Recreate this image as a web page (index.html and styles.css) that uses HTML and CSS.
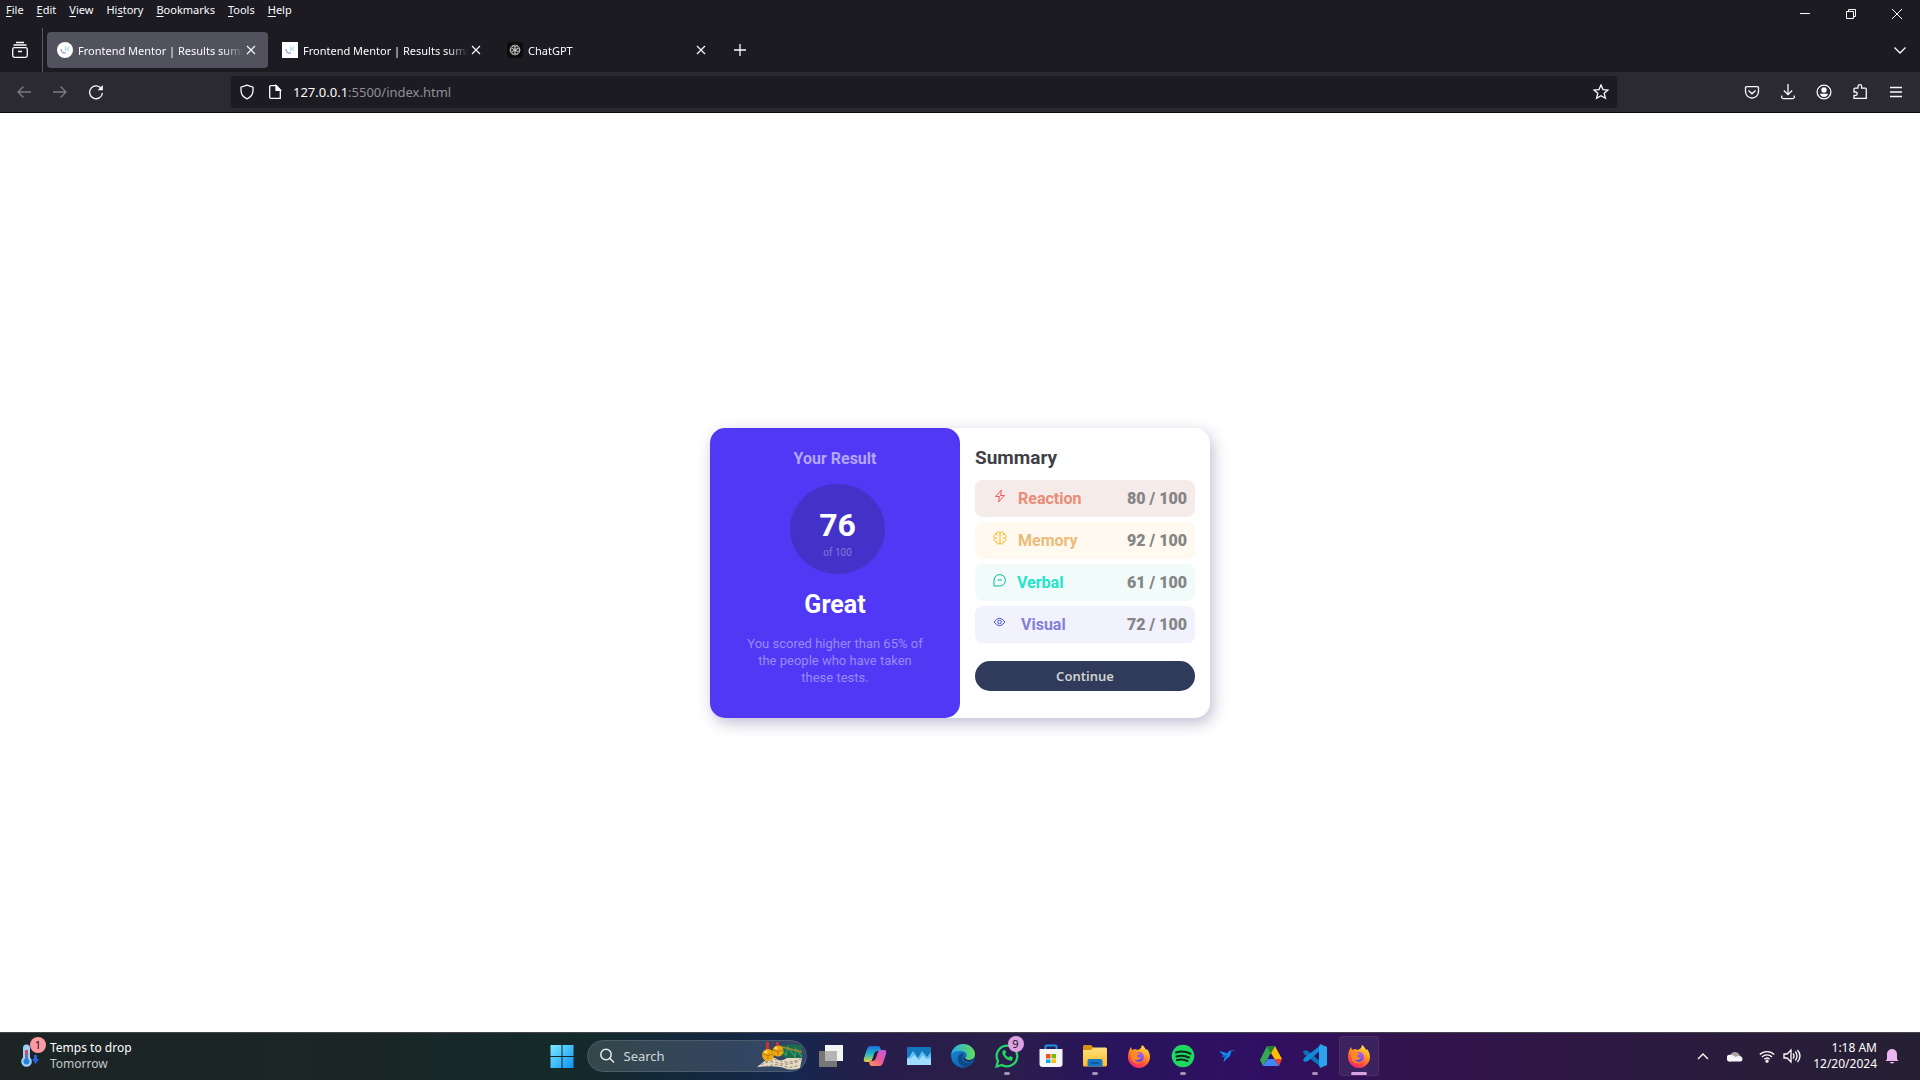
FILE: index.html
```html
<!DOCTYPE html>
<html lang="en">
<head>
<meta charset="utf-8">
<title>Frontend Mentor | Results summary component</title>
<link rel="stylesheet" href="styles.css">
</head>
<body>
<svg class="defs" aria-hidden="true">
  <defs>
    <linearGradient id="win" x1="0" y1="0" x2="1" y2="1"><stop offset="0" stop-color="#7eeaff"/><stop offset="1" stop-color="#0a93f5"/></linearGradient>
    <linearGradient id="foxBody" x1=".8" y1="0" x2=".3" y2="1"><stop offset="0" stop-color="#fff04a"/><stop offset=".4" stop-color="#ff9a1f"/><stop offset=".75" stop-color="#ff4a3d"/><stop offset="1" stop-color="#f0257e"/></linearGradient>
    <linearGradient id="foxCore" x1=".7" y1="0" x2=".3" y2="1"><stop offset="0" stop-color="#b15cff"/><stop offset="1" stop-color="#5a49d6"/></linearGradient>
    <linearGradient id="copA" x1="0" y1="0" x2="0" y2="1"><stop offset="0" stop-color="#1a6be0"/><stop offset=".5" stop-color="#22b8c8"/><stop offset="1" stop-color="#e8d438"/></linearGradient>
    <linearGradient id="copB" x1="1" y1="0" x2="0" y2="1"><stop offset="0" stop-color="#b45cf0"/><stop offset=".5" stop-color="#f0569a"/><stop offset="1" stop-color="#ff9a4a"/></linearGradient>
    <linearGradient id="edgeA" x1="0" y1="0" x2="1" y2="0"><stop offset="0" stop-color="#2aa6e8"/><stop offset="1" stop-color="#5fe05a"/></linearGradient>
    <linearGradient id="edgeB" x1="0" y1="0" x2="1" y2="1"><stop offset="0" stop-color="#1b8fdc"/><stop offset="1" stop-color="#0c4f9e"/></linearGradient>
    <linearGradient id="folder" x1="0" y1="0" x2="0" y2="1"><stop offset="0" stop-color="#ffe07a"/><stop offset="1" stop-color="#fbbc2c"/></linearGradient>
    <linearGradient id="therm" x1="0" y1="0" x2="0" y2="1"><stop offset="0" stop-color="#ef4458"/><stop offset="1" stop-color="#1e86d8"/></linearGradient>
    <symbol id="close" viewBox="0 0 16 16"><path d="M4 4l8 8M12 4l-8 8" fill="none" stroke="currentColor" stroke-width="1.1"/></symbol>
    <symbol id="fm" viewBox="0 0 16 16"><path d="M4 7c0 3 2 4.500 5 4" fill="none" stroke="#a9a8dc" stroke-width="1.500"/><path d="M8.500 4v5M12 5l-2 2 2 2" fill="none" stroke="#a9dfe9" stroke-width="1.200"/></symbol>
    <symbol id="firefox" viewBox="0 0 24 24">
      <path d="M1 13C1 9 2 6 4 3l1 3 3-1c1 0 2 1 3 1l3-2 1-3c2 1 3 3 4 5l1-1c2 3 3 5 3 8 0 6-5 11-11 11S1 19 1 13z" fill="url(#foxBody)"/>
      <circle cx="12" cy="13" r="5" fill="url(#foxCore)"/>
      <path d="M4 9c2-2 5-2 7 0l2 1c-1 1-3 1-3 2s2 2 4 1c-1 3-5 4-7 2 1 3 5 4 8 3-6 4-12 0-11-9z" fill="#ff8a24"/>
    </symbol>
  </defs>
</svg>

<header class="browser">
  <div class="menubar">
    <nav class="menus" aria-label="Menu bar">
      <button><u>F</u>ile</button><button><u>E</u>dit</button><button><u>V</u>iew</button><button>Hi<u>s</u>tory</button><button><u>B</u>ookmarks</button><button><u>T</u>ools</button><button><u>H</u>elp</button>
    </nav>
    <div class="window-controls">
      <button aria-label="Minimize"><svg width="12" height="12" viewBox="0 0 12 12"><path d="M1 5.500h10"/></svg></button>
      <button aria-label="Restore"><svg width="12" height="12" viewBox="0 0 12 12"><path d="M1.500 3.500h7v7h-7zM3.500 3.500v-2h7v7h-2"/></svg></button>
      <button aria-label="Close"><svg width="12" height="12" viewBox="0 0 12 12"><path d="M1 1l10 10M11 1L1 11"/></svg></button>
    </div>
  </div>
  <div class="tabstrip">
    <button class="view-button" aria-label="Firefox View"><svg width="18" height="18" viewBox="0 0 18 18"><rect x="1.700" y="6.700" width="14.600" height="9.600" rx="1.800"/><path d="M2.500 4.500Q3 4 4 4h10q1 0 1.500.5M5 1.500h8M7 10.500h4"/></svg></button>
    <div class="tabs">
      <div class="tab active"><svg class="favicon round" viewBox="0 0 16 16"><use href="#fm"/></svg><span class="tab-title">Frontend Mentor | Results summ</span><button aria-label="Close tab"><svg width="16" height="16"><use href="#close"/></svg></button></div>
      <div class="tab"><svg class="favicon" viewBox="0 0 16 16"><use href="#fm"/></svg><span class="tab-title">Frontend Mentor | Results summ</span><button aria-label="Close tab"><svg width="16" height="16"><use href="#close"/></svg></button></div>
      <div class="tab"><svg class="favicon dark" viewBox="0 0 16 16"><g fill="none" stroke="#d8d8d8" stroke-width=".7"><ellipse cx="8" cy="5.300" rx="3" ry="2.200"/><ellipse cx="8" cy="5.300" rx="3" ry="2.200" transform="rotate(60 8 8)"/><ellipse cx="8" cy="5.300" rx="3" ry="2.200" transform="rotate(120 8 8)"/><ellipse cx="8" cy="5.300" rx="3" ry="2.200" transform="rotate(180 8 8)"/><ellipse cx="8" cy="5.300" rx="3" ry="2.200" transform="rotate(240 8 8)"/><ellipse cx="8" cy="5.300" rx="3" ry="2.200" transform="rotate(300 8 8)"/></g></svg><span class="tab-title">ChatGPT</span><button aria-label="Close tab"><svg width="16" height="16"><use href="#close"/></svg></button></div>
    </div>
    <button class="new-tab" aria-label="New tab"><svg width="16" height="16" viewBox="0 0 16 16"><path d="M8 2v12M2 8h12"/></svg></button>
    <button class="all-tabs" aria-label="List all tabs"><svg width="16" height="16" viewBox="0 0 16 16"><path d="M2.500 5.500L8 11l5.500-5.500"/></svg></button>
  </div>
  <div class="toolbar">
    <div class="history">
      <button class="dim" aria-label="Back"><svg width="16" height="16" viewBox="0 0 16 16"><path d="M15 8H2M7.500 2.500L2 8l5.500 5.500"/></svg></button>
      <button class="dim" aria-label="Forward"><svg width="16" height="16" viewBox="0 0 16 16"><path d="M1 8h13M8.500 2.500L14 8l-5.500 5.500"/></svg></button>
      <button aria-label="Reload"><svg width="16" height="16" viewBox="0 0 16 16"><path d="M13.500 5A6.400 6.400 0 1 0 14.400 9"/><path d="M14.800 1v5.200H9.600z" fill="currentColor" stroke="none"/></svg></button>
    </div>
    <div class="urlbar">
      <svg width="16" height="16" viewBox="0 0 16 16"><path d="M8 1.200l6 2v3.300c0 4-2.500 6.800-6 8.300-3.500-1.500-6-4.300-6-8.300V3.200z"/></svg>
      <svg width="16" height="16" viewBox="0 0 16 16"><path d="M3.700 1.700h5.600l4 4v8.600H3.700a1 1 0 0 1-1-1V2.700a1 1 0 0 1 1-1z"/><path d="M9 1.500v4.800h4.500z" fill="currentColor"/></svg>
      <span class="url"><b>127.0.0.1</b>:5500/index.html</span>
      <button aria-label="Bookmark this page"><svg width="16" height="16" viewBox="0 0 16 16"><path d="M8 1l2 4.600 5 .4-3.800 3.300 1.200 5L8 11.800l-4.400 2.500 1.200-5L1 6l5-.4z"/></svg></button>
    </div>
    <div class="actions">
      <button aria-label="Pocket"><svg width="16" height="16" viewBox="0 0 16 16"><path d="M2.500 2.700h11a1 1 0 0 1 1 1V7.500a6.500 6.500 0 0 1-13 0V3.700a1 1 0 0 1 1-1zM4.500 6.500L8 9.800l3.500-3.300"/></svg></button>
      <button aria-label="Downloads"><svg width="16" height="16" viewBox="0 0 16 16"><path d="M8 0v10.500M3.800 6.500L8 10.700l4.200-4.200M1.700 11.500v1.600a1.500 1.500 0 0 0 1.500 1.500h9.600a1.500 1.500 0 0 0 1.500-1.500v-1.600"/></svg></button>
      <button aria-label="Account"><svg width="16" height="16" viewBox="0 0 16 16"><circle cx="8" cy="8" r="6.900"/><g fill="currentColor" stroke="none"><circle cx="8" cy="6" r="2.700"/><path d="M4 9.800h8c0 2-2 3.200-4 3.200s-4-1.200-4-3.200z"/></g></svg></button>
      <button aria-label="Extensions"><svg width="16" height="16" viewBox="0 0 16 16"><path d="M2 8V5.200a1 1 0 0 1 1-1h3V2.500a1.800 1.800 0 0 1 3.600 0v1.700h3.700a1 1 0 0 1 1 1v9.200H2v-3h1.500a1.700 1.700 0 0 0 0-3.400z"/></svg></button>
      <button aria-label="Open menu"><svg width="16" height="16" viewBox="0 0 16 16"><path d="M2 3.500h12M2 8h12M2 12.500h12"/></svg></button>
    </div>
  </div>
</header>

<main>
  <article class="card">
    <section class="result">
      <h2>Your Result</h2>
      <div class="score"><strong>76</strong><span>of 100</span></div>
      <h1>Great</h1>
      <p>You scored higher than 65% of the people who have taken these tests.</p>
    </section>
    <section class="summary">
      <h2>Summary</h2>
      <ul>
        <li class="reaction"><svg width="25" height="16" viewBox="0 0 25 16"><path d="M8.500 2L2.500 8.500h4L5.500 14l6-6.500h-4z"/></svg><span>Reaction</span><b>80 / 100</b></li>
        <li class="memory"><svg width="25" height="16" viewBox="0 0 25 16"><path d="M7 2v12M7 3.500C6 1 3 1.500 3 4 .5 4.500.2 7 1.500 8c-1 2 0 3.500 1.700 4C4 14.500 6.500 14.500 7 13c.5 1.500 3 1.500 3.800-1 1.700-.5 2.700-2 1.700-4C13.800 7 13.500 4.500 11 4c0-2.500-3-3-4-.5M1.500 8H4M12.500 8H10M3 4l1.500 1.500M11 4L9.500 5.500M3.500 12L5 10.500M10.500 12L9 10.500"/></svg><span>Memory</span><b>92 / 100</b></li>
        <li class="verbal"><svg width="24" height="16" viewBox="0 0 24 16"><path d="M1 14V8a5.700 5.700 0 1 1 5.700 6zM4.500 8h4.400"/></svg><span>Verbal</span><b>61 / 100</b></li>
        <li class="visual"><svg width="28" height="16" viewBox="0 0 28 16"><path d="M1 8q5.500-7.500 11 0-5.500 7.500-11 0z"/><circle cx="6.500" cy="8" r="1.800"/></svg><span>Visual</span><b>72 / 100</b></li>
      </ul>
      <button class="continue">Continue</button>
    </section>
  </article>
</main>

<footer class="taskbar">
  <button class="weather">
    <span class="weather-icon"><svg width="20" height="24" viewBox="0 0 20 24"><path d="M3 4a3.500 3.500 0 0 1 7 0v9.500a5.300 5.300 0 1 1-7 0z" fill="#9ed0f5"/><circle cx="6.500" cy="17.500" r="3" fill="#1e86d8"/><path d="M5 6h3v11H5z" fill="url(#therm)"/><path d="M14 11h3v4h2l-3.500 5L12 15h2z" fill="#2463e8"/></svg><span class="badge">1</span></span>
    <span class="weather-text"><span>Temps to drop</span><small>Tomorrow</small></span>
  </button>
  <nav class="apps" aria-label="Taskbar">
    <button class="app" aria-label="Start"><svg width="24" height="24" viewBox="0 0 24 24"><path d="M0.500 1h11v11h-11zM12.500 1h11v11h-11zM.5 13h11v11h-11zM12.500 13h11v11h-11z" fill="url(#win)"/></svg></button>
    <label class="search"><svg width="16" height="16" viewBox="0 0 16 16"><circle cx="7" cy="6.500" r="5.200"/><path d="M10.800 10.300L15 14.500"/></svg><input type="search" placeholder="Search" aria-label="Search">
      <svg class="bells" width="48" height="28" viewBox="0 0 48 28"><path d="M16 7Q32 0 46 4v14L30 16z" fill="#1c6b4c"/><path d="M20 4l10 9 2-8 7 10 1-8 6 8" fill="none" stroke="#2f9a6b" stroke-width="1.500"/><path d="M22 4l24 6" stroke="#a8842c"/><path d="M1 25l10-8q6-3 10 0t10-1l15 0-2 10q-9 3-16 0T1 25z" fill="#e6dac4"/><path d="M5 23q8-5 17-2t21-2M9 20q8-4 16-1t20-2M9 25q10-4 18-1t16-1" fill="none" stroke="#7b6e60" stroke-width=".8" stroke-dasharray="3 2"/><path d="M10 0h3v9h-3zM20 0h3v5h-3z" fill="#d22c35"/><circle cx="12" cy="13" r="6" fill="#eda812"/><circle cx="22" cy="9" r="5.500" fill="#eda812"/><path d="M7 12q5 3 10 0M12 14v3M17 8q5 3 10 0M22 10v3" fill="none" stroke="#a8690c" stroke-width=".8"/><circle cx="10" cy="10" r="1.500" fill="#ffe16b"/><circle cx="20" cy="6" r="1.300" fill="#ffe16b"/></svg>
    </label>
    <button class="app" aria-label="Task view"><svg width="24" height="24" viewBox="0 0 24 24"><path d="M6 1h18v16H6z" fill="#f4f4f4"/><path d="M0 7h18v16H0z" fill="#777"/><path d="M6 7h12v10H6z" fill="#b5b5b5"/></svg></button>
    <button class="app" aria-label="Copilot"><svg width="24" height="24" viewBox="0 0 24 24"><path d="M7 2h8q2 0 2.500 2l.5 3h-4q-2 0-3 3l-2 6q-1 2-3 2H3q-3 0-2-4L4 5q1-3 3-3z" fill="url(#copA)"/><path d="M17 22H9q-2 0-2.500-2L6 17h4q2 0 3-3l2-6q1-2 3-2h3q3 0 2 4l-3 9q-1 3-3 3z" fill="url(#copB)"/></svg></button>
    <button class="app" aria-label="Task Manager"><svg width="24" height="24" viewBox="0 0 24 24"><rect y="3" width="24" height="18" rx="1" fill="#1377bd"/><path d="M0 14l2-1 4-6 5 7 4-7 5 6 4-5v13H0z" fill="#5fbdf0"/><path d="M0 15l4-1 3-3 5 5 4-5 3 4 5-1v7H0z" fill="#9fdcff"/></svg></button>
    <button class="app" aria-label="Edge"><svg width="24" height="24" viewBox="0 0 24 24"><circle cx="12" cy="12" r="11.800" fill="url(#edgeB)"/><path d="M0 11C1 4 6 0 12 0c7 0 12 5 12 10 0 4-3 6-6 6-4 0-4-2-3-3 2-3-1-6-5-6C5 7 1 8 0 11z" fill="url(#edgeA)"/><path d="M8 11c-3 5 1 12 8 12 3-1 6-3 7-6-5 3-12 2-12-3 0-2 1-3 2-4-2-1-4 0-5 1z" fill="#0c4a86"/><path d="M23.800 14c-2 3-5 4-8.800 3-3-1-3-3-2-5 0 4 6 5 9 3z" fill="#2b1f4c"/></svg></button>
    <button class="app" aria-label="WhatsApp"><svg width="24" height="24" viewBox="0 0 24 24"><path d="M1.500 22.500L3 17A10.300 10.300 0 1 1 7 21z" fill="none" stroke="#25d366" stroke-width="2.300"/><path d="M8 6.500c-3 3 4 11.500 9 10l1-3-3-1.500-1.500 1.500Q11 12 10 10l1.300-1.500L10 6z" fill="#25d366"/></svg><span class="badge">9</span><i></i></button>
    <button class="app" aria-label="Microsoft Store"><svg width="24" height="24" viewBox="0 0 24 24"><path d="M6.500 6V2.500a1 1 0 0 1 1-1h9a1 1 0 0 1 1 1V6" fill="none" stroke="#1c95e0" stroke-width="2"/><path d="M.5 5h23v15a3 3 0 0 1-3 3h-17a3 3 0 0 1-3-3z" fill="#f4f5f8"/><path d="M7 10h4.500v4.500H7z" fill="#f25022"/><path d="M12.500 10H17v4.500h-4.500z" fill="#7fba00"/><path d="M7 15.500h4.500V19H7z" fill="#00a4ef"/><path d="M12.500 15.500H17V19h-4.500z" fill="#ffb900"/></svg></button>
    <button class="app" aria-label="File Explorer"><svg width="24" height="24" viewBox="0 0 24 24"><path d="M0 2.500A1.500 1.500 0 0 1 1.500 1H8l2.500 2.500V8H0z" fill="#d5930f"/><path d="M0 6h8l2.500-2.500h12A1.500 1.500 0 0 1 24 5v16a1.500 1.500 0 0 1-1.500 1.500h-21A1.500 1.500 0 0 1 0 21z" fill="url(#folder)"/><path d="M4.500 22.500V17a2 2 0 0 1 2-2h11a2 2 0 0 1 2 2v5.500z" fill="#1976c5"/><path d="M8 19h8" stroke="#0b4f92" stroke-width="1.500"/></svg><i></i></button>
    <button class="app" aria-label="Firefox"><svg width="24" height="24"><use href="#firefox"/></svg></button>
    <button class="app" aria-label="Spotify"><svg width="24" height="24" viewBox="0 0 24 24"><circle cx="12" cy="12" r="11.300" fill="#1ed760"/><path d="M5 8.500q7.500-2.500 14.500 1.200M5.500 12.500q6.500-2 12.500 1M6 16q5.500-1.500 10.500 1" fill="none" stroke="#12271b" stroke-width="2" stroke-linecap="round"/></svg><i></i></button>
    <button class="app" aria-label="Bird"><svg width="24" height="24" viewBox="0 0 24 24"><path d="M4 7l6 1.500 2 1 2-2.500q1-1 6-.8l-4 1.300q0 5-4 7l-3.500 4 1-5.500L6.500 13l2-1.500z" fill="#1687ef"/><path d="M7 12l5-1.500-2 4z" fill="#0a5fc4"/></svg></button>
    <button class="app" aria-label="Google Drive"><svg width="24" height="24" viewBox="0 0 24 24"><path d="M8 2h8l-4 7z" fill="#188038"/><path d="M8 2l4 7-8 13-3-6z" fill="#34a853"/><path d="M16 2l7 13h-7.500L12 9z" fill="#fbbc04"/><path d="M8.500 15h7l4.500 7H4z" fill="#4285f4"/><path d="M15.500 15H23l-3 7z" fill="#ea4335"/></svg></button>
    <button class="app" aria-label="Visual Studio Code"><svg width="24" height="24" viewBox="0 0 24 24"><path d="M0 8l2-2 3 1 13 11v5L1 10z" fill="#0b72b8"/><path d="M0 16l2 2 3-1L18 6V1L1 14z" fill="#1289d6"/><path d="M17 0l7 3v18l-7 3-1-3V3z" fill="#2ba4ee"/></svg><i></i></button>
    <button class="app current" aria-label="Firefox, active"><svg width="24" height="24"><use href="#firefox"/></svg><i></i></button>
  </nav>
  <div class="tray">
    <button class="chev" aria-label="Show hidden icons"><svg width="16" height="16" viewBox="0 0 16 16"><path d="M3 11l5-5 5 5"/></svg></button>
    <button class="cloud" aria-label="OneDrive"><svg width="16" height="16" viewBox="0 0 16 16"><path d="M3 9a5 5 0 0 1 9-3l2 3-5 4z" fill="#a7a4ab" stroke="none"/><path d="M4 13.500a3.500 3.500 0 1 1 .5-6.500q2 0 4 2c3-2 7-1 7 2a2.500 2.500 0 0 1-2.500 2.500z" fill="#f6f5f7" stroke="none"/></svg></button>
    <button class="network" aria-label="Network and volume"><svg width="16" height="16" viewBox="0 0 16 16"><path d="M.8 6.500a10.300 10.300 0 0 1 14.400 0M3 9a7 7 0 0 1 10 0M5.300 11.300a3.900 3.900 0 0 1 5.400 0"/><circle cx="8" cy="13.200" r="1"/></svg><svg width="18" height="16" viewBox="0 0 18 16"><path d="M1 6h3l4-4v12l-4-4H1zM10 5.500q2 2.500 0 5M12.300 3.500q3.500 4.500 0 9M14.500 2q5 6 0 12"/></svg></button>
    <button class="clock"><span>1:18 AM</span><span>12/20/2024</span></button>
    <button class="bell" aria-label="Notifications"><svg width="16" height="16" viewBox="0 0 16 16"><path d="M3 11V6a5 5 0 0 1 10 0v5l1.500 2h-13zM5.500 14h5q-2.500 3-5 0z" fill="#ecb6f0" stroke="none"/></svg></button>
  </div>
</footer>
</body>
</html>
```
FILE: styles.css
```css
* { box-sizing: border-box; }
body {
  margin: 0;
  min-height: 100vh;
  display: flex;
  flex-direction: column;
  background: #fff;
  font-family: "Noto Sans", "Open Sans", sans-serif;
}
button {
  padding: 0;
  border: 0;
  background: none;
  color: inherit;
  font: inherit;
}
svg { display: block; flex: none; }
.defs { position: absolute; width: 0; height: 0; }

/* Browser chrome */
.browser {
  background: #1c1b22;
  color: #fbfbfe;
  font-size: 11px;
  border-bottom: 1px solid #0c0c0d;
}
.browser svg { fill: none; stroke: currentColor; stroke-width: 1.3; }
.menubar { display: flex; justify-content: space-between; height: 28px; }
.menus { display: flex; gap: 13px; padding-left: 6px; height: 20px; line-height: 20px; }
.menus u { text-underline-offset: 2px; }
.window-controls { display: flex; }
.window-controls button { width: 46px; display: grid; place-items: center; }
.window-controls svg { stroke-width: 1; }
.tabstrip { display: flex; height: 44px; align-items: center; }
.view-button {
  width: 43px;
  height: 44px;
  padding: 0 0 0 11px;
  border-right: 1px solid #5b5a62;
}
.tabs { display: flex; gap: 4px; padding: 4px; }
.tab {
  display: flex;
  align-items: center;
  width: 221px;
  height: 36px;
  padding: 0 9px 0 10px;
  border-radius: 4px;
}
.tab.active { background: #52525e; }
.tab .favicon { stroke: none; }
.favicon { width: 16px; height: 16px; background: #fff; margin-right: 5px; }
.favicon.round { border-radius: 50%; }
.favicon.dark { background: #0d0d0d; border-radius: 3px; }
.tab-title {
  flex: 1;
  min-width: 0;
  overflow: hidden;
  white-space: nowrap;
  mask-image: linear-gradient(to left, transparent, #000 20px);
}
.new-tab { margin-left: 2px; width: 32px; display: grid; place-items: center; }
.all-tabs { margin-left: auto; margin-right: 12px; }
.toolbar { display: flex; align-items: center; height: 40px; background: #2b2a33; }
.history { display: flex; gap: 20px; width: 231px; padding-left: 16px; }
.dim { color: #7c7b83; }
.urlbar {
  flex: 1;
  display: flex;
  align-items: center;
  height: 32px;
  padding: 0 8px;
  border-radius: 4px;
  background: #1c1b22;
}
.urlbar > svg + svg { margin-left: 12px; }
.url { flex: 1; margin-left: 10px; font-size: 13px; color: #8f8f95; }
.url b { font-weight: 400; color: #fbfbfe; }
.actions { display: flex; justify-content: flex-end; gap: 20px; width: 303px; padding-right: 16px; }

/* Results card */
main { flex: 1; display: grid; place-items: center; font-family: Roboto, sans-serif; }
.card {
  display: grid;
  grid-template-columns: 1fr 1fr;
  width: 500px;
  border-radius: 15px;
  background: #fff;
  box-shadow: 3px 5px 15px rgba(50, 40, 110, .3);
}
.result {
  padding: 20px 35px 32px;
  border-radius: 15px;
  background: #5038f5;
  text-align: center;
  color: #988af8;
}
.result h2 { margin: 0; font-size: 16px; line-height: 22px; color: #b3a6fb; }
.score {
  display: flex;
  flex-direction: column;
  align-items: center;
  width: 95px;
  height: 90px;
  margin: 14px 0 15px 45px;
  padding-top: 22px;
  border-radius: 50%;
  background: #4232c8;
}
.score strong { font-size: 32px; line-height: 38px; color: #fff; }
.score span { font-size: 10px; line-height: 18px; color: #8279dc; }
.result h1 { margin: 0; font-size: 25px; line-height: 32px; color: #fff; }
.result p { margin: 14px 0 0; font-size: 13px; line-height: 17px; }
.summary { padding: 15px; }
.summary h2 { margin: 0 0 7px; font-size: 19px; line-height: 30px; color: #3f3f46; }
.summary ul {
  display: flex;
  flex-direction: column;
  gap: 5px;
  margin: 0;
  padding: 0;
  list-style: none;
}
.summary li {
  display: flex;
  align-items: center;
  height: 37px;
  padding: 0 8px 0 18px;
  border-radius: 8px;
  font-size: 16px;
  font-weight: 700;
}
.summary li svg { fill: none; stroke: currentColor; margin-bottom: 4px; }
.summary li span { flex: 1; }
.summary li b { color: #858585; }
.reaction { background: #f5ebe8; color: #e98b76; }
.reaction svg { color: #f55; }
.memory { background: #fff9f0; color: #ebbc78; }
.memory svg { color: #ffb21e; }
.verbal { background: #f1fbfa; color: #1fe5cb; }
.verbal svg { color: #00bb8f; }
.visual { background: #f2f2ff; color: #8280d8; }
.visual svg { color: #4a55de; }
.continue {
  width: 100%;
  height: 30px;
  margin-top: 18px;
  border-radius: 15px;
  background: #303a5a;
  color: #d2d0ce;
  font: 600 13px "Noto Sans", sans-serif;
}

/* Taskbar */
.taskbar {
  display: grid;
  grid-template-columns: 1fr auto 1fr;
  height: 48px;
  padding-bottom: 1px;
  border-top: 1px solid #44464c;
  background: linear-gradient(90deg, #1c2424 0%, #1a2626 20%, #142a2a 30%, #14274c 41%, #281d4a 46%, #2a1e4a 52%, #29145e 58%, #300f62 66%, #34144e 73%, #2c1a40 86%, #252033 100%);
  color: #fff;
  font-size: 12px;
}
.weather { display: flex; align-items: center; gap: 6px; padding-left: 20px; text-align: left; }
.weather-icon { position: relative; width: 24px; }
.weather-text { display: flex; flex-direction: column; line-height: 16px; }
.weather-text small { font-size: 12px; color: #c3c6c6; }
.badge {
  position: absolute;
  top: -7px;
  right: -2px;
  width: 16px;
  height: 16px;
  border-radius: 50%;
  background: #ff99a4;
  color: #111;
  font-size: 11px;
  line-height: 16px;
  text-align: center;
}
.apps { display: flex; align-items: center; }
.app {
  position: relative;
  width: 40px;
  height: 40px;
  margin: 0 2px;
  display: grid;
  place-items: center;
  border-radius: 4px;
}
.app .badge { top: 0; right: 3px; background: #dda0e0; }
.app i {
  position: absolute;
  left: 17px;
  bottom: 1px;
  width: 6px;
  height: 3px;
  border-radius: 2px;
  background: #a294b4;
}
.app.current { background: #3d2260; box-shadow: inset 0 0 0 1px #4a2f69; }
.app.current i { left: 12px; width: 16px; background: #dda0e0; }
.search {
  display: flex;
  align-items: center;
  width: 220px;
  height: 32px;
  margin: 0 2px 0 3px;
  padding: 0 2px 0 11px;
  border: 1px solid #4c5c6c;
  border-radius: 16px;
  background: linear-gradient(90deg, #34474a, #32456a);
}
.search svg { fill: none; stroke: #e6eaec; stroke-width: 1.5; }
.search .bells { stroke: none; }
.search input {
  flex: 1;
  min-width: 0;
  padding: 0 9px;
  border: 0;
  background: none;
  color: #d0d7da;
  font: 13px "Noto Sans", sans-serif;
}
.search input::placeholder { color: #d0d7da; opacity: 1; }
.tray { display: flex; align-items: center; justify-content: flex-end; padding-right: 20px; }
.tray svg { fill: none; stroke: #fff; stroke-width: 1.3; }
.chev { margin-right: 16px; }
.cloud { margin-right: 16px; }
.network { display: flex; gap: 8px; margin-right: 12px; }
.clock { display: flex; flex-direction: column; line-height: 16px; text-align: right; }
.bell { margin-left: 7px; }
```
